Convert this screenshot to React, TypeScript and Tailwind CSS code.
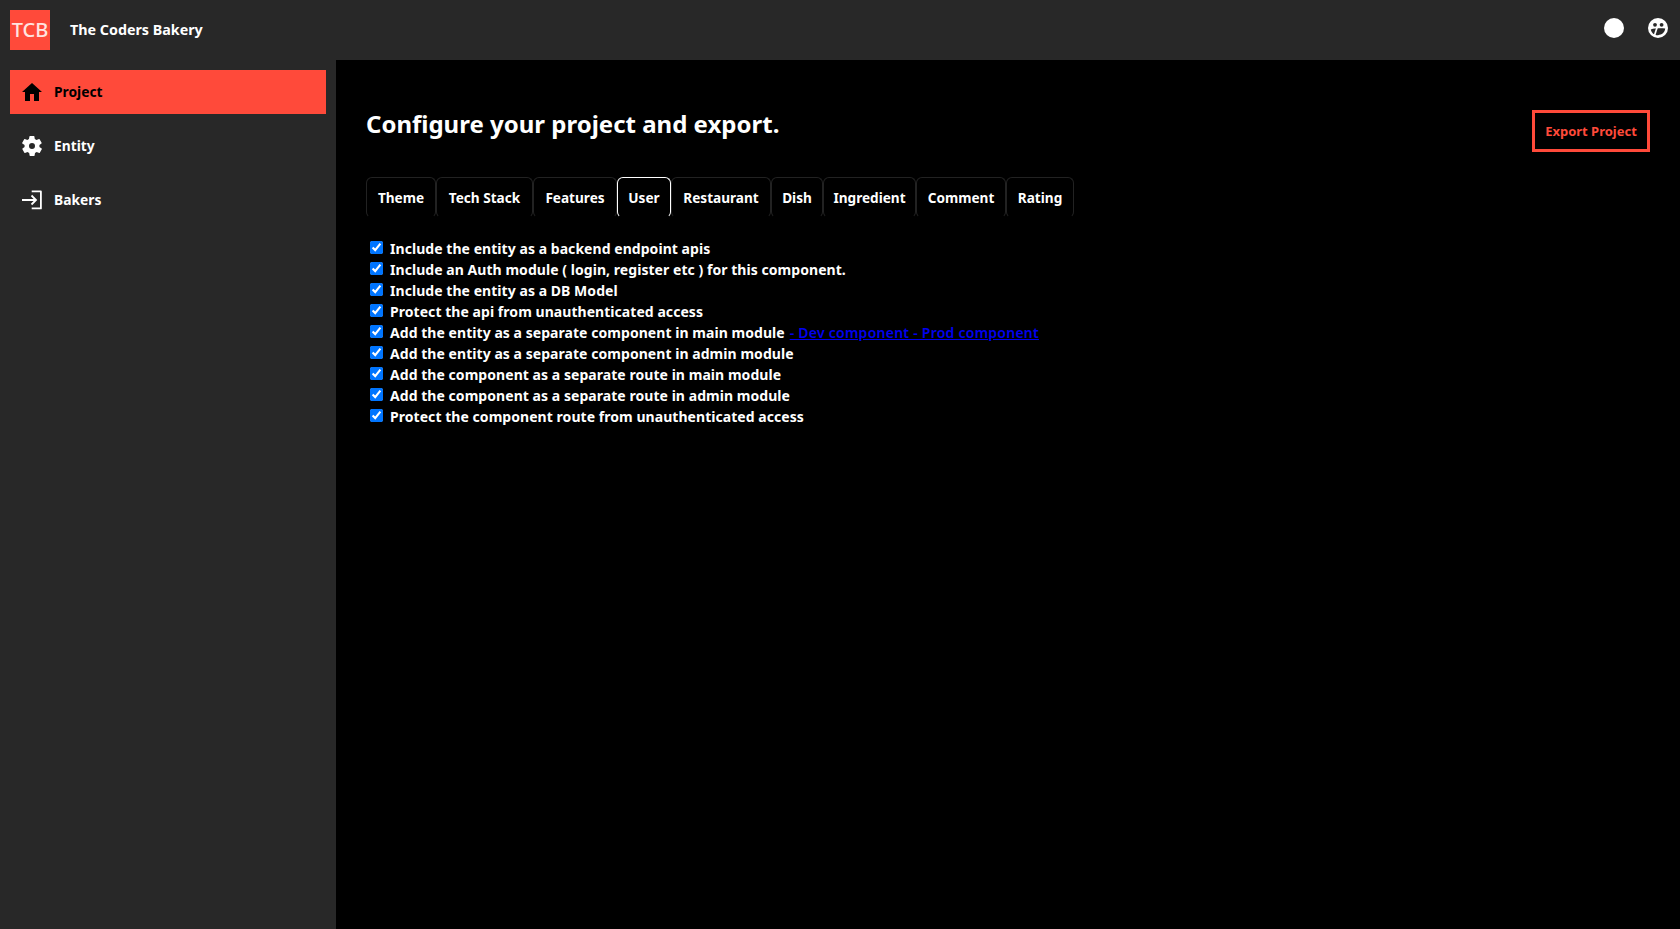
const font = { fontFamily: '"Noto Sans", sans-serif' };

const tabs = [
  { label: "Theme", width: "w-[70px]" },
  { label: "Tech Stack", width: "w-[97px]" },
  { label: "Features", width: "w-[84px]" },
  { label: "User", width: "w-[54px]" },
  { label: "Restaurant", width: "w-[100px]" },
  { label: "Dish", width: "w-[52px]" },
  { label: "Ingredient", width: "w-[93px]" },
  { label: "Comment", width: "w-[90px]" },
  { label: "Rating", width: "w-[68px]" },
];

const options = [
  "Include the entity as a backend endpoint apis",
  "Include an Auth module ( login, register etc ) for this component.",
  "Include the entity as a DB Model",
  "Protect the api from unauthenticated access",
  "Add the entity as a separate component in main module",
  "Add the entity as a separate component in admin module",
  "Add the component as a separate route in main module",
  "Add the component as a separate route in admin module",
  "Protect the component route from unauthenticated access",
];

function GearIcon() {
  return (
    <svg viewBox="0 0 24 24" className="w-[24px] h-[24px] fill-white">
      <path
        fillRule="evenodd"
        d="M19.4 13a7.6 7.6 0 0 0 0-2l2.1-1.6a.5.5 0 0 0 .1-.6l-2-3.5a.5.5 0 0 0-.6-.2l-2.5 1a7.3 7.3 0 0 0-1.7-1l-.4-2.6a.5.5 0 0 0-.5-.5h-4a.5.5 0 0 0-.5.4l-.4 2.7a7.7 7.7 0 0 0-1.7 1l-2.5-1a.5.5 0 0 0-.6.2l-2 3.5a.5.5 0 0 0 .1.6L4.6 11a7.9 7.9 0 0 0 0 2l-2.1 1.6a.5.5 0 0 0-.1.6l2 3.5c.1.2.4.3.6.2l2.5-1c.5.4 1.1.7 1.7 1l.4 2.6c0 .3.2.5.5.5h4c.3 0 .5-.2.5-.4l.4-2.7c.6-.3 1.2-.6 1.7-1l2.5 1c.2.1.5 0 .6-.2l2-3.5a.5.5 0 0 0-.1-.6L19.4 13ZM12 15a3 3 0 1 1 0-6 3 3 0 0 1 0 6Z"
      />
    </svg>
  );
}

function HomeIcon() {
  return (
    <svg viewBox="0 0 24 24" className="w-6 h-6 fill-black">
      <path d="M10 21v-7h4v7h5v-9h3L12 3 2 12h3v9z" />
    </svg>
  );
}

function LoginIcon() {
  return (
    <svg viewBox="0 0 24 24" className="w-6 h-6 fill-none stroke-white" strokeWidth={1.8}>
      <path d="M2 12h14M11.5 7.5 16 12l-4.5 4.5" />
      <path d="M11.7 3.4h9.2v17h-9.2" strokeLinejoin="round" />
    </svg>
  );
}

function FaceIcon() {
  return (
    <svg viewBox="0 0 20 20" className="w-5 h-5">
      <circle cx="10" cy="10" r="10" fill="white" />
      <circle cx="7" cy="6.8" r="1.9" fill="#282828" />
      <circle cx="13.6" cy="6.8" r="1.9" fill="#282828" />
      <path d="M2.8 11.4 C7 10.2 13 10.2 17.2 10.6 C16.8 14.6 13.8 16.8 10 17.2 C6 17.2 3.4 14.8 2.8 11.4Z" fill="#282828" />
      <path d="M8 10 L5.4 18 L7.2 18 L9.8 10Z" fill="white" />
    </svg>
  );
}

export default function App() {
  return (
    <div className="flex flex-col h-[929px] w-full bg-black text-white font-bold text-sm" style={font}>
      {/* top bar */}
      <header className="h-[60px] bg-[#282828] flex items-center pl-[10px] pr-[12px] shrink-0">
        <div className="w-10 h-10 bg-[#ff4a3a] flex items-center justify-center text-[20px] font-medium text-[#ffe4e0]">TCB</div>
        <span className="ml-5 text-[14.3px]">The Coders Bakery</span>
        <div className="ml-auto flex items-center gap-[24px] -mt-[4px]">
          <div className="w-5 h-5 rounded-full bg-white" />
          <FaceIcon />
        </div>
      </header>

      <div className="flex flex-1 min-h-0">
        {/* sidebar */}
        <aside className="w-[336px] bg-[#282828] shrink-0 pt-[10px] px-[10px] flex flex-col gap-[10px]">
          <a className="h-[44px] bg-[#ff4a3a] flex items-center pl-[10px] gap-[10px] text-black">
            <HomeIcon />
            <span className="text-[13.8px]">Project</span>
          </a>
          <a className="h-[44px] flex items-center pl-[10px] gap-[10px]">
            <GearIcon />
            <span className="text-[13.8px]">Entity</span>
          </a>
          <a className="h-[44px] flex items-center pl-[10px] gap-[10px]">
            <LoginIcon />
            <span className="text-[13.8px]">Bakers</span>
          </a>
        </aside>

        {/* main */}
        <main className="flex-1 bg-black pl-[30px] pr-[30px] pt-[50px]">
          <div className="flex justify-between items-start">
            <h1 className="text-[24px] leading-[30px] -mt-[1px]">Configure your project and export.</h1>
            <button className="w-[118px] h-[42px] border-[3px] border-[#ff4a3a] text-[#ff4a3a] text-[13px]">Export Project</button>
          </div>

          <div className="flex mt-[25px]">
            {tabs.map((t) => (
              <div
                key={t.label}
                className={`${t.width} h-[41px] flex items-center justify-center border border-b-transparent rounded-[6px] text-[13.6px] ${t.label === "User" ? "border-x-white border-t-white" : "border-x-[#222222] border-t-[#222222]"}`}
              >
                {t.label}
              </div>
            ))}
          </div>

          <div className="mt-[20px] flex flex-col pl-1">
            {options.map((o, i) => (
              <label key={o} className="h-[21px] flex items-center gap-[7px]">
                <input type="checkbox" defaultChecked readOnly className="w-[13px] h-[13px] m-0 accent-[#0075ff] -mt-[3px]" />
                <span className="tracking-[0.05px]">
                  {o}
                  {i === 4 && (
                    <a className="text-[#0000ee] underline ml-[5px] tracking-[0.25px] font-semibold">- Dev component - Prod component</a>
                  )}
                </span>
              </label>
            ))}
          </div>
        </main>
      </div>
    </div>
  );
}
